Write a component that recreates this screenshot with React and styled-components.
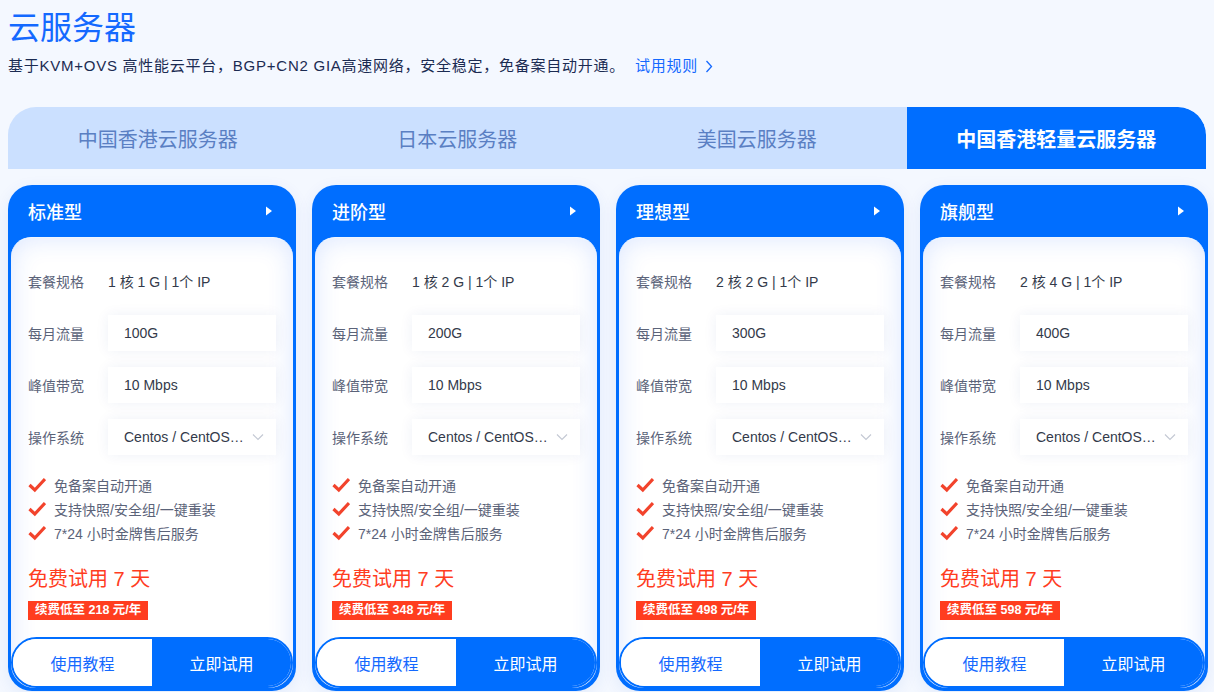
import styled, { createGlobalStyle } from "styled-components";

const GlobalStyle = createGlobalStyle`
  html, body {
    margin: 0;
    padding: 0;
    background: #f4f8ff;
  }
  body {
    font-family: "Liberation Sans", "Noto Sans CJK SC", sans-serif;
    overflow: hidden;
  }
`;

const Page = styled.div`
  width: 1214px;
  height: 692px;
  padding: 0 8px;
  box-sizing: border-box;
  background: #f4f8ff;
`;

const Title = styled.h1`
  margin: 0;
  padding-top: 8px;
  font-size: 32px;
  line-height: 40px;
  font-weight: 400;
  color: #1469ff;
`;

const Subtitle = styled.p`
  margin: 7px 0 0;
  font-size: 15px;
  line-height: 22px;
  letter-spacing: 0.75px;
  color: #1b2b52;
  display: flex;
  align-items: center;
`;

const RuleLink = styled.a`
  margin-left: 10px;
  color: #1469ff;
  display: inline-flex;
  align-items: center;
  gap: 7px;
  text-decoration: none;
`;

const Tabs = styled.div`
  margin-top: 30px;
  display: grid;
  grid-template-columns: repeat(4, 1fr);
  height: 62px;
  background: #cbe0ff;
  border-radius: 28px 28px 0 0;
  overflow: hidden;
`;

const Tab = styled.div`
  display: flex;
  align-items: center;
  justify-content: center;
  font-size: 20px;
  color: ${p => (p.$active ? "#fff" : "#5a7fc3")};
  font-weight: ${p => (p.$active ? 700 : 400)};
  background: ${p => (p.$active ? "#006eff" : "transparent")};
  border-top-right-radius: ${p => (p.$active ? "28px" : "0")};
`;

const Cards = styled.div`
  margin-top: 16px;
  display: grid;
  grid-template-columns: repeat(4, 288px);
  gap: 16px;
`;

const Card = styled.div`
  background: #006eff;
  border-radius: 24px;
  padding: 0 3px 3px;
  box-shadow: 0 4px 16px rgba(0, 80, 200, 0.08);
`;

const CardHead = styled.div`
  height: 52px;
  display: flex;
  align-items: center;
  justify-content: space-between;
  padding: 0 20px 0 17px;
  color: #fff;
  font-size: 18px;
  font-weight: 500;
`;

const Panel = styled.div`
  background: #fff;
  border-radius: 20px 20px 24px 24px;
  border-top: 1px solid #f2f7ff;
  box-shadow: inset 0 0 26px rgba(30, 100, 255, 0.16);
  padding-top: 25px;
`;

const Rows = styled.div`
  display: flex;
  flex-direction: column;
  gap: 16px;
  padding: 0 17px;
`;

const Row = styled.div`
  display: flex;
  align-items: center;
  height: 36px;
`;

const Label = styled.span`
  width: 80px;
  flex: none;
  font-size: 14px;
  color: #5b6379;
`;

const Plain = styled.span`
  font-size: 14px;
  color: #333a4a;
`;

const ValueBox = styled.div`
  flex: 1;
  height: 36px;
  background: #fff;
  box-shadow: 0 0 14px rgba(20, 60, 140, 0.07);
  display: flex;
  align-items: center;
  justify-content: space-between;
  padding: 0 12px 0 16px;
  font-size: 14px;
  color: #333a4a;
  min-width: 0;
`;

const Features = styled.ul`
  list-style: none;
  margin: 18px 0 0;
  padding: 0 17px;
`;

const Feature = styled.li`
  height: 24px;
  display: flex;
  align-items: center;
  gap: 8px;
  font-size: 14px;
  color: #5b6379;
`;

const Price = styled.div`
  margin: 22px 17px 0;
  font-size: 20px;
  line-height: 24px;
  color: #ff3d1f;
`;

const Badge = styled.div`
  margin: 10px 17px 0;
  display: inline-block;
  height: 19px;
  line-height: 19px;
  padding: 0 7px;
  background: #ff3d1f;
  color: #fff;
  font-size: 12.5px;
  font-weight: 700;
`;

const Actions = styled.div`
  margin-top: 17px;
  height: 51px;
  display: grid;
  grid-template-columns: 139px 1fr;
  border: 2px solid #006eff;
  border-radius: 26px;
  overflow: hidden;
  box-sizing: border-box;
`;

const ActionButton = styled.button`
  border: 0;
  margin: 0;
  font-family: inherit;
  font-size: 16px;
  cursor: pointer;
  background: ${p => (p.$primary ? "#006eff" : "#fff")};
  color: ${p => (p.$primary ? "#fff" : "#1469ff")};
`;

const Check = () => (
  <svg width="18" height="16" viewBox="0 0 18 16">
    <path d="M1.5 8 L6.8 13 L17 2" fill="none" stroke="#f2432c" strokeWidth="3.2" strokeLinejoin="miter" />
  </svg>
);

const plans = [
  { name: "标准型", spec: "1 核 1 G | 1个 IP", traffic: "100G", price: 218 },
  { name: "进阶型", spec: "1 核 2 G | 1个 IP", traffic: "200G", price: 348 },
  { name: "理想型", spec: "2 核 2 G | 1个 IP", traffic: "300G", price: 498 },
  { name: "旗舰型", spec: "2 核 4 G | 1个 IP", traffic: "400G", price: 598 },
];

const features = ["免备案自动开通", "支持快照/安全组/一键重装", "7*24 小时金牌售后服务"];

const tabs = ["中国香港云服务器", "日本云服务器", "美国云服务器", "中国香港轻量云服务器"];

export default function App() {
  return (
    <Page>
      <GlobalStyle />
      <Title>云服务器</Title>
      <Subtitle>
        基于KVM+OVS 高性能云平台，BGP+CN2 GIA高速网络，安全稳定，免备案自动开通。
        <RuleLink>
          试用规则
          <svg width="8" height="13" viewBox="0 0 8 13">
            <path d="M1.5 1 L6.5 6.5 L1.5 12" fill="none" stroke="#1469ff" strokeWidth="1.3" />
          </svg>
        </RuleLink>
      </Subtitle>
      <Tabs>
        {tabs.map((t, i) => (
          <Tab key={t} $active={i === 3}>{t}</Tab>
        ))}
      </Tabs>
      <Cards>
        {plans.map(p => (
          <Card key={p.name}>
            <CardHead>
              {p.name}
              <svg width="8" height="10" viewBox="0 0 8 10">
                <path d="M1 0.5 L7 5 L1 9.5 Z" fill="#fff" />
              </svg>
            </CardHead>
            <Panel>
              <Rows>
                <Row>
                  <Label>套餐规格</Label>
                  <Plain>{p.spec}</Plain>
                </Row>
                <Row>
                  <Label>每月流量</Label>
                  <ValueBox>{p.traffic}</ValueBox>
                </Row>
                <Row>
                  <Label>峰值带宽</Label>
                  <ValueBox>10 Mbps</ValueBox>
                </Row>
                <Row>
                  <Label>操作系统</Label>
                  <ValueBox>
                    <span>Centos / CentOS…</span>
                    <svg width="12" height="8" viewBox="0 0 12 8">
                      <path d="M1 1.5 L6 6.5 L11 1.5" fill="none" stroke="#c4c9d4" strokeWidth="1.2" />
                    </svg>
                  </ValueBox>
                </Row>
              </Rows>
              <Features>
                {features.map(f => (
                  <Feature key={f}>
                    <Check />
                    {f}
                  </Feature>
                ))}
              </Features>
              <Price>免费试用 7 天</Price>
              <Badge>续费低至 {p.price} 元/年</Badge>
              <Actions>
                <ActionButton>使用教程</ActionButton>
                <ActionButton $primary>立即试用</ActionButton>
              </Actions>
            </Panel>
          </Card>
        ))}
      </Cards>
    </Page>
  );
}
